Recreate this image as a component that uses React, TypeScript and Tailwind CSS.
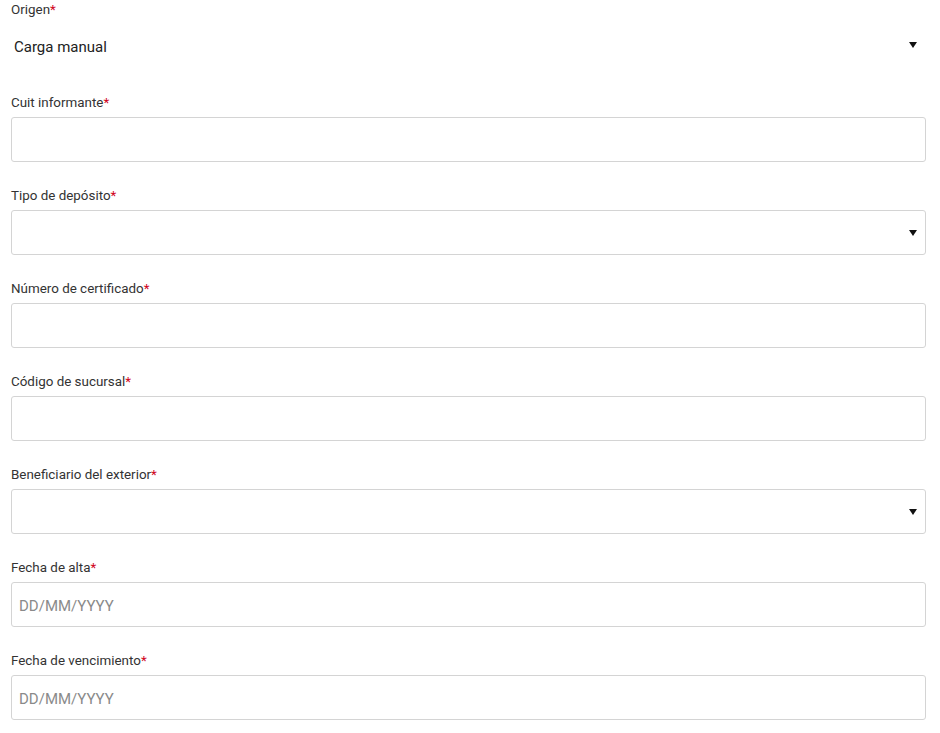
const Req = () => <span className="text-[#d0021b]">*</span>;

const Arrow = ({ className = "" }: { className?: string }) => (
  <svg width="8" height="6" viewBox="0 0 8 6" className={"shrink-0 " + className}>
    <path d="M0 0 H8 L4 6 Z" fill="#111" />
  </svg>
);

type Field = { label: string; kind: "text" | "select" | "date" };

const fields: Field[] = [
  { label: "Cuit informante", kind: "text" },
  { label: "Tipo de depósito", kind: "select" },
  { label: "Número de certificado", kind: "text" },
  { label: "Código de sucursal", kind: "text" },
  { label: "Beneficiario del exterior", kind: "select" },
  { label: "Fecha de alta", kind: "date" },
  { label: "Fecha de vencimiento", kind: "date" },
];

export default function App() {
  return (
    <div
      className="w-[940px] h-[733px] bg-white overflow-hidden pl-[11px] pr-[14px] pt-[2px]"
      style={{ fontFamily: "Roboto, 'Noto Sans', sans-serif" }}
    >
      {/* Origen */}
      <div className="mb-[26px]">
        <label className="block text-[13.4px] leading-[16px] text-[#333]">
          Origen<Req />
        </label>
        <div className="h-[51px] flex items-center justify-between pl-[3px] pr-[9px] pt-[8px]">
          <span className="text-[15px] text-[#222]">Carga manual</span>
          <Arrow className="mb-[6px]" />
        </div>
      </div>

      {fields.map((f) => (
        <div key={f.label} className="mb-[26px]">
          <label className="block text-[13.4px] leading-[16px] text-[#333] mb-[6px]">
            {f.label}
            <Req />
          </label>
          <div className="h-[45px] border border-[#d4d4d4] rounded-[3px] flex items-center justify-between pl-[7px] pr-[8px]">
            {f.kind === "date" ? (
              <span className="text-[15px] text-[#8a8a8a] mt-[3px]">DD/MM/YYYY</span>
            ) : (
              <span />
            )}
            {f.kind === "select" && <Arrow />}
          </div>
        </div>
      ))}
    </div>
  );
}
